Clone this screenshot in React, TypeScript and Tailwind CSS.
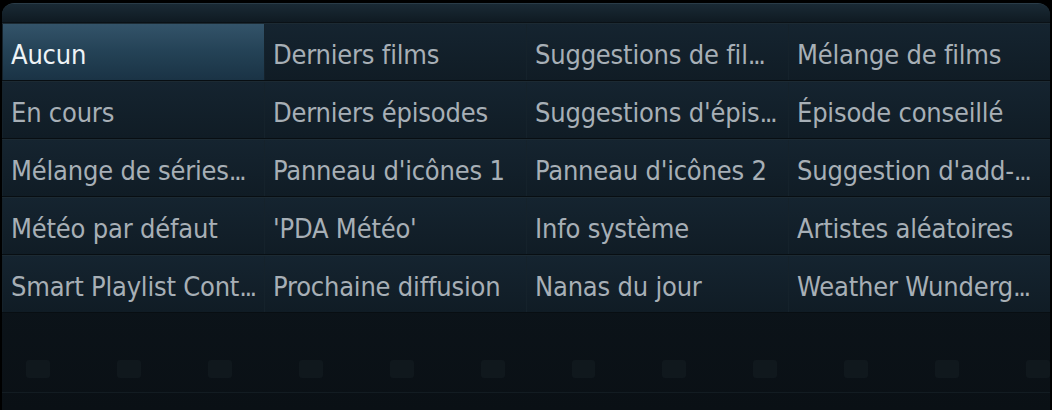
import React from "react";

const items = [
  "Aucun", "Derniers films", "Suggestions de fil...", "Mélange de films",
  "En cours", "Derniers épisodes", "Suggestions d'épis...", "Épisode conseillé",
  "Mélange de séries...", "Panneau d'icônes 1", "Panneau d'icônes 2", "Suggestion d'add-...",
  "Météo par défaut", "'PDA Météo'", "Info système", "Artistes aléatoires",
  "Smart Playlist Cont...", "Prochaine diffusion", "Nanas du jour", "Weather Wunderg...",
];

function Label({ t }: { t: string }) {
  if (t.endsWith("...")) {
    return (
      <>
        {t.slice(0, -3)}
        <span className="tracking-[-2.5px]">...</span>
      </>
    );
  }
  return <>{t}</>;
}

export default function App() {
  return (
    <div className="w-[1052px] h-[410px] bg-black overflow-hidden pt-[3px] px-[2px]">
      <div className="h-[407px] rounded-t-[12px] border-t border-[#2a3c48] bg-gradient-to-b from-[#13212b] via-[#0d161d] to-[#0a1015] flex flex-col overflow-hidden">
        <div className="h-[18px] bg-gradient-to-b from-[#1a2a35] to-[#0f1a22]" />
        <div className="grid grid-cols-4 border-t border-[#0a1116]">
          {items.map((t, i) => {
            const sel = i === 0;
            return (
              <div
                key={i}
                className={
                  "h-[58px] flex items-center pl-[9px] pt-[5px] border-b border-[#080e12] shadow-[inset_0_1px_0_#1c2a33,inset_1px_0_0_#15222b] " +
                  (sel
                    ? "bg-gradient-to-b from-[#34546a] via-[#244256] to-[#1a3345] text-[#eef3f6]"
                    : "bg-gradient-to-b from-[#152430] to-[#101c25] text-[#a7afb6]")
                }
              >
                <span
                  className="whitespace-nowrap text-[27px] leading-none tracking-[-0.2px]"
                  style={{ fontFamily: "'DejaVu Sans Condensed', 'DejaVu Sans', sans-serif", fontStretch: "condensed" }}
                >
                  <Label t={t} />
                </span>
              </div>
            );
          })}
        </div>
        <div className="flex-1 relative">
          <div className="flex gap-[67px] pl-[24px] pt-[47px]">
            {Array.from({ length: 12 }).map((_, i) => (
              <div key={i} className="w-[25px] h-[18px] rounded-[3px] bg-[#10181d]" />
            ))}
          </div>
          <div className="mt-[14px] h-px bg-[#131c22]" />
        </div>
      </div>
    </div>
  );
}
